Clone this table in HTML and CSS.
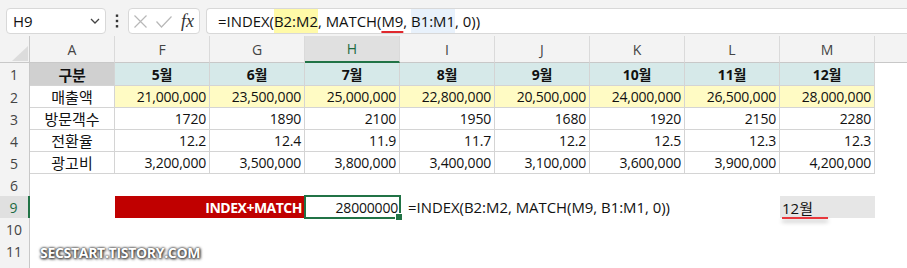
FILE: index.html
```html
<!DOCTYPE html>
<html lang="ko">
<head>
<meta charset="utf-8">
<title>INDEX MATCH</title>
<link rel="stylesheet" href="styles.css">
</head>
<body>
<div class="app">
  <div class="toolbar">
    <div class="namebox">
      <span class="nb-text">H9</span>
      <svg class="chev" width="10" height="6" viewBox="0 0 10 6"><path d="M1 1 L5 5 L9 1" fill="none" stroke="#444" stroke-width="1.3"/></svg>
    </div>
    <div class="kebab">
      <svg width="4" height="14" viewBox="0 0 4 14"><rect x="0.8" y="0.5" width="2.4" height="2.4" fill="#333"/><rect x="0.8" y="5.8" width="2.4" height="2.4" fill="#333"/><rect x="0.8" y="11.1" width="2.4" height="2.4" fill="#333"/></svg>
    </div>
    <div class="fnbox">
      <svg class="ic-x" width="13" height="13" viewBox="0 0 13 13"><path d="M0.5 0.5 L12.5 12.5 M12.5 0.5 L0.5 12.5" stroke="#b8b8b8" stroke-width="1.2" fill="none"/></svg>
      <svg class="ic-ok" width="16" height="12" viewBox="0 0 16 12"><path d="M0.5 5.5 L5.5 11 L15.5 0.5" stroke="#b8b8b8" stroke-width="1.2" fill="none"/></svg>
      <span class="fx">fx</span>
    </div>
    <div class="formula">=INDEX(<span class="hl-y">B2:M2</span>, MATCH(<span class="ul">M9</span>, <span class="hl-b">B1:M1</span>, 0))</div>
  </div>

  <div class="sheet">
    <div class="corner"><svg width="22" height="20" viewBox="0 0 22 20"><path d="M21 4 L21 19 L5 19 Z" fill="#dcdcdc"/></svg></div>
    <div class="ch">A</div>
    <div class="ch">F</div>
    <div class="ch">G</div>
    <div class="ch sel">H</div>
    <div class="ch">I</div>
    <div class="ch">J</div>
    <div class="ch">K</div>
    <div class="ch">L</div>
    <div class="ch">M</div>
    <div class="ch rest"></div>

    <div class="rh">1</div>
    <div class="c ctr b gray">구분</div>
    <div class="c ctr b teal">5월</div>
    <div class="c ctr b teal">6월</div>
    <div class="c ctr b teal">7월</div>
    <div class="c ctr b teal">8월</div>
    <div class="c ctr b teal">9월</div>
    <div class="c ctr b teal">10월</div>
    <div class="c ctr b teal">11월</div>
    <div class="c ctr b teal">12월</div>
    <div class="blank"></div>

    <div class="rh">2</div>
    <div class="c ctr ko">매출액</div>
    <div class="c num yel">21,000,000</div>
    <div class="c num yel">23,500,000</div>
    <div class="c num yel">25,000,000</div>
    <div class="c num yel">22,800,000</div>
    <div class="c num yel">20,500,000</div>
    <div class="c num yel">24,000,000</div>
    <div class="c num yel">26,500,000</div>
    <div class="c num yel">28,000,000</div>
    <div class="blank"></div>

    <div class="rh">3</div>
    <div class="c ctr ko">방문객수</div>
    <div class="c num">1720</div>
    <div class="c num">1890</div>
    <div class="c num">2100</div>
    <div class="c num">1950</div>
    <div class="c num">1680</div>
    <div class="c num">1920</div>
    <div class="c num">2150</div>
    <div class="c num">2280</div>
    <div class="blank"></div>

    <div class="rh">4</div>
    <div class="c ctr ko">전환율</div>
    <div class="c num">12.2</div>
    <div class="c num">12.4</div>
    <div class="c num">11.9</div>
    <div class="c num">11.7</div>
    <div class="c num">12.2</div>
    <div class="c num">12.5</div>
    <div class="c num">12.3</div>
    <div class="c num">12.3</div>
    <div class="blank"></div>

    <div class="rh">5</div>
    <div class="c ctr ko">광고비</div>
    <div class="c num">3,200,000</div>
    <div class="c num">3,500,000</div>
    <div class="c num">3,800,000</div>
    <div class="c num">3,400,000</div>
    <div class="c num">3,100,000</div>
    <div class="c num">3,600,000</div>
    <div class="c num">3,900,000</div>
    <div class="c num">4,200,000</div>
    <div class="blank"></div>

    <div class="rh">6</div>
    <div class="blank full"></div>

    <div class="rh sel">9</div>
    <div class="blank"></div>
    <div class="label">INDEX+MATCH</div>
    <div class="active">28000000</div>
    <div class="ftext">=INDEX(B2:M2, MATCH(M9, B1:M1, 0))</div>
    <div class="lookup"><span class="lk">12월</span></div>
    <div class="blank"></div>

    <div class="rh">10</div>
    <div class="blank full"></div>

    <div class="rh">11</div>
    <div class="blank full"></div>

    <div class="rh"></div>
    <div class="blank full"></div>
  </div>

  <div class="wm">SECSTART.TISTORY.COM</div>
</div>
</body>
</html>
```

FILE: styles.css
```css
* { box-sizing: border-box; }

body {
  margin: 0;
  background: #ffffff;
  font-family: "Open Sans", "Noto Sans CJK KR", sans-serif;
  font-size: 14px;
  color: #111;
}

.app {
  position: relative;
  width: 907px;
  height: 268px;
  overflow: hidden;
}

/* ---------- toolbar ---------- */
.toolbar {
  display: flex;
  align-items: flex-start;
  height: 36px;
  padding: 8px 0 0 6px;
  background: #f3f3f3;
}

.namebox {
  width: 100px;
  height: 26px;
  background: #fff;
  border: 1px solid #d8d8d8;
  border-radius: 4px;
  display: flex;
  align-items: center;
  justify-content: space-between;
  padding: 0 5px 0 6px;
  font-size: 15px;
  color: #111;
}

.kebab {
  width: 22px;
  height: 26px;
  display: flex;
  align-items: center;
  justify-content: center;
}

.fnbox {
  width: 72px;
  height: 26px;
  background: #fff;
  border: 1px solid #d8d8d8;
  border-radius: 4px;
  display: flex;
  align-items: center;
  padding-left: 5px;
}

.ic-x { margin-right: 9px; }
.ic-ok { margin-right: 9px; margin-top: 1px; }

.fx {
  font-family: "Liberation Serif", serif;
  font-style: italic;
  font-size: 18px;
  color: #333;
  line-height: 1;
}

.formula {
  flex: 1;
  margin-left: 6px;
  height: 26px;
  background: #fff;
  border: 1px solid #d8d8d8;
  border-right: none;
  border-radius: 4px 0 0 4px;
  padding-left: 11px;
  display: flex;
  align-items: center;
  white-space: pre;
  font-size: 14.9px;
  color: #111;
}

.hl-y, .hl-b {
  display: inline-block;
  line-height: 24px;
}
.hl-y { background: #fffaa8; }
.hl-b { background: #e8f1fb; }

.ul {
  text-decoration: underline;
  text-decoration-color: #e0282d;
  text-decoration-thickness: 2px;
  text-underline-offset: 4px;
}

/* ---------- sheet ---------- */
.sheet {
  display: grid;
  grid-template-columns: 30px 85px repeat(8, 95px) 1fr;
  grid-template-rows: 27px 23px;
  grid-auto-rows: 22px;
}

.corner {
  background: #f3f3f3;
  border-right: 1px solid #c8c8c8;
  border-bottom: 1px solid #c8c8c8;
  display: flex;
  align-items: flex-end;
  justify-content: flex-end;
}

.ch {
  background: #f3f3f3;
  border-right: 1px solid #dadada;
  border-bottom: 1px solid #c8c8c8;
  display: flex;
  align-items: center;
  justify-content: center;
  color: #444;
  font-size: 14px;
}
.ch.rest { border-right: none; }
.ch.sel {
  background: #e0e0e0;
  color: #1d6b40;
  border-bottom: 2px solid #217346;
}

.rh {
  background: #f3f3f3;
  border-right: 1px solid #c8c8c8;
  display: flex;
  align-items: center;
  justify-content: center;
  color: #444;
  font-size: 14px;
  padding-right: 1px;
}
.rh.sel {
  background: #e0e0e0;
  color: #1d6b40;
  border-right: 2px solid #217346;
}

.c {
  border-right: 1px solid #d4d4d4;
  border-bottom: 1px solid #d4d4d4;
  display: flex;
  align-items: center;
  padding: 0 3px;
  white-space: nowrap;
  letter-spacing: -0.2px;
}
.num { justify-content: flex-end; }
.ctr { justify-content: center; }
.ko { font-size: 15px; letter-spacing: 0; }
.b { font-weight: 700; }

.gray { background: #d0d0d0; font-size: 15px; }
.teal { background: #d6e9e9; }
.yel { background: #fffbc4; }

.blank { background: #fff; }
.full { grid-column: 2 / -1; }

/* row 9 */
.label {
  grid-column: span 2;
  background: #c00000;
  color: #fff;
  font-weight: 700;
  display: flex;
  align-items: center;
  justify-content: flex-end;
  padding-right: 3px;
  letter-spacing: -0.5px;
}

.active {
  position: relative;
  display: flex;
  align-items: center;
  justify-content: flex-end;
  padding-right: 2px;
  letter-spacing: -0.2px;
}
.active::after {
  content: "";
  position: absolute;
  top: -1px;
  left: -1px;
  right: -1px;
  bottom: -1px;
  border: 2px solid #217346;
}
.active::before {
  content: "";
  position: absolute;
  right: -3px;
  bottom: -3px;
  width: 6px;
  height: 6px;
  background: #217346;
  border: 1px solid #fff;
  z-index: 2;
}

.ftext {
  grid-column: span 4;
  display: flex;
  align-items: center;
  padding-left: 8px;
  white-space: pre;
  font-size: 14.9px;
}

.lookup {
  background: #e6e6e6;
  display: flex;
  align-items: center;
  padding-left: 2px;
}
.lk {
  position: relative;
  font-size: 15px;
}
.lk::after {
  content: "";
  position: absolute;
  left: 0;
  top: 20px;
  width: 46px;
  height: 2px;
  background: #e8383d;
  box-shadow: 0 3px 4px rgba(0, 0, 0, 0.3);
}

/* watermark */
.wm {
  position: absolute;
  left: 40px;
  top: 243px;
  font-family: "Open Sans", sans-serif;
  font-weight: 700;
  font-size: 14px;
  letter-spacing: -0.3px;
  color: #fff;
  text-shadow: 0 0 2px #333, 0 0 3px #555, 1px 1px 3px #222;
}
```
